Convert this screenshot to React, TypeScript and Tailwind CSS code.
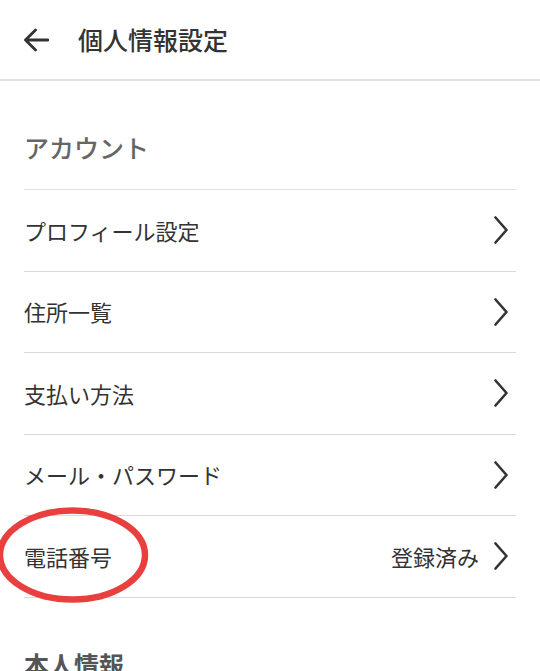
import React from "react";

const FONT = {
  fontFamily: '"Noto Sans CJK JP", "Noto Sans", sans-serif',
};

const ACCOUNT_ITEMS = [
  { label: "プロフィール設定" },
  { label: "住所一覧" },
  { label: "支払い方法" },
  { label: "メール・パスワード" },
  { label: "電話番号", value: "登録済み", circled: true },
];

function Chevron() {
  return (
    <svg width="16" height="28" viewBox="0 0 16 28" fill="none" className="shrink-0">
      <path
        d="M2.5 1.5 L13.5 14 L2.5 26.5"
        stroke="#333"
        strokeWidth="2.6"
        strokeLinecap="round"
        strokeLinejoin="round"
      />
    </svg>
  );
}

function Row({ label, value, circled }: { label: string; value?: string; circled?: boolean }) {
  return (
    <div className="relative mx-6 flex h-[81.5px] items-center border-b-[1.5px] border-[#d9d9d9]">
      <span className="text-[22px] text-[#333]">{label}</span>
      <div className="ml-auto flex items-center gap-[14px] pr-[7px]">
        {value && <span className="text-[22px] text-[#333]">{value}</span>}
        <Chevron />
      </div>
      {circled && (
        // red hand-drawn marker ring around the label
        <svg
          className="pointer-events-none absolute left-[-27px] top-[-9px]"
          width="160"
          height="100"
          viewBox="0 0 160 100"
          fill="none"
        >
          <ellipse cx="75.5" cy="48" rx="72.5" ry="44.5" stroke="#e8403f" strokeWidth="6.5" />
        </svg>
      )}
    </div>
  );
}

export default function App() {
  return (
    <div className="min-h-[671px] w-full overflow-hidden bg-white" style={FONT}>
      {/* ─── HEADER ─── */}
      <header className="flex h-[81px] items-center border-b-2 border-[#e2e2e2] pl-[23px]">
        <svg width="26" height="24" viewBox="0 0 26 24" fill="none" className="shrink-0">
          <path
            d="M2.5 12 H25 M12.5 2 L2.5 12 L12.5 22"
            stroke="#333"
            strokeWidth="2.8"
            strokeLinecap="round"
            strokeLinejoin="round"
          />
        </svg>
        <h1 className="ml-[29px] text-[25px] font-medium text-[#333]">個人情報設定</h1>
      </header>

      {/* ─── ACCOUNT ─── */}
      <section>
        <h2 className="mx-6 border-b-[1.5px] border-[#e2e2e2] pb-[23px] pt-[48px] text-[25px] leading-[37px] font-medium text-[#666]">
          アカウント
        </h2>
        {ACCOUNT_ITEMS.map((item) => (
          <Row key={item.label} {...item} />
        ))}
      </section>

      {/* ─── IDENTITY ─── */}
      <section>
        <h2 className="mx-6 pb-[23px] pt-[48px] text-[25px] leading-[37px] font-bold text-[#555]">
          本人情報
        </h2>
      </section>
    </div>
  );
}
